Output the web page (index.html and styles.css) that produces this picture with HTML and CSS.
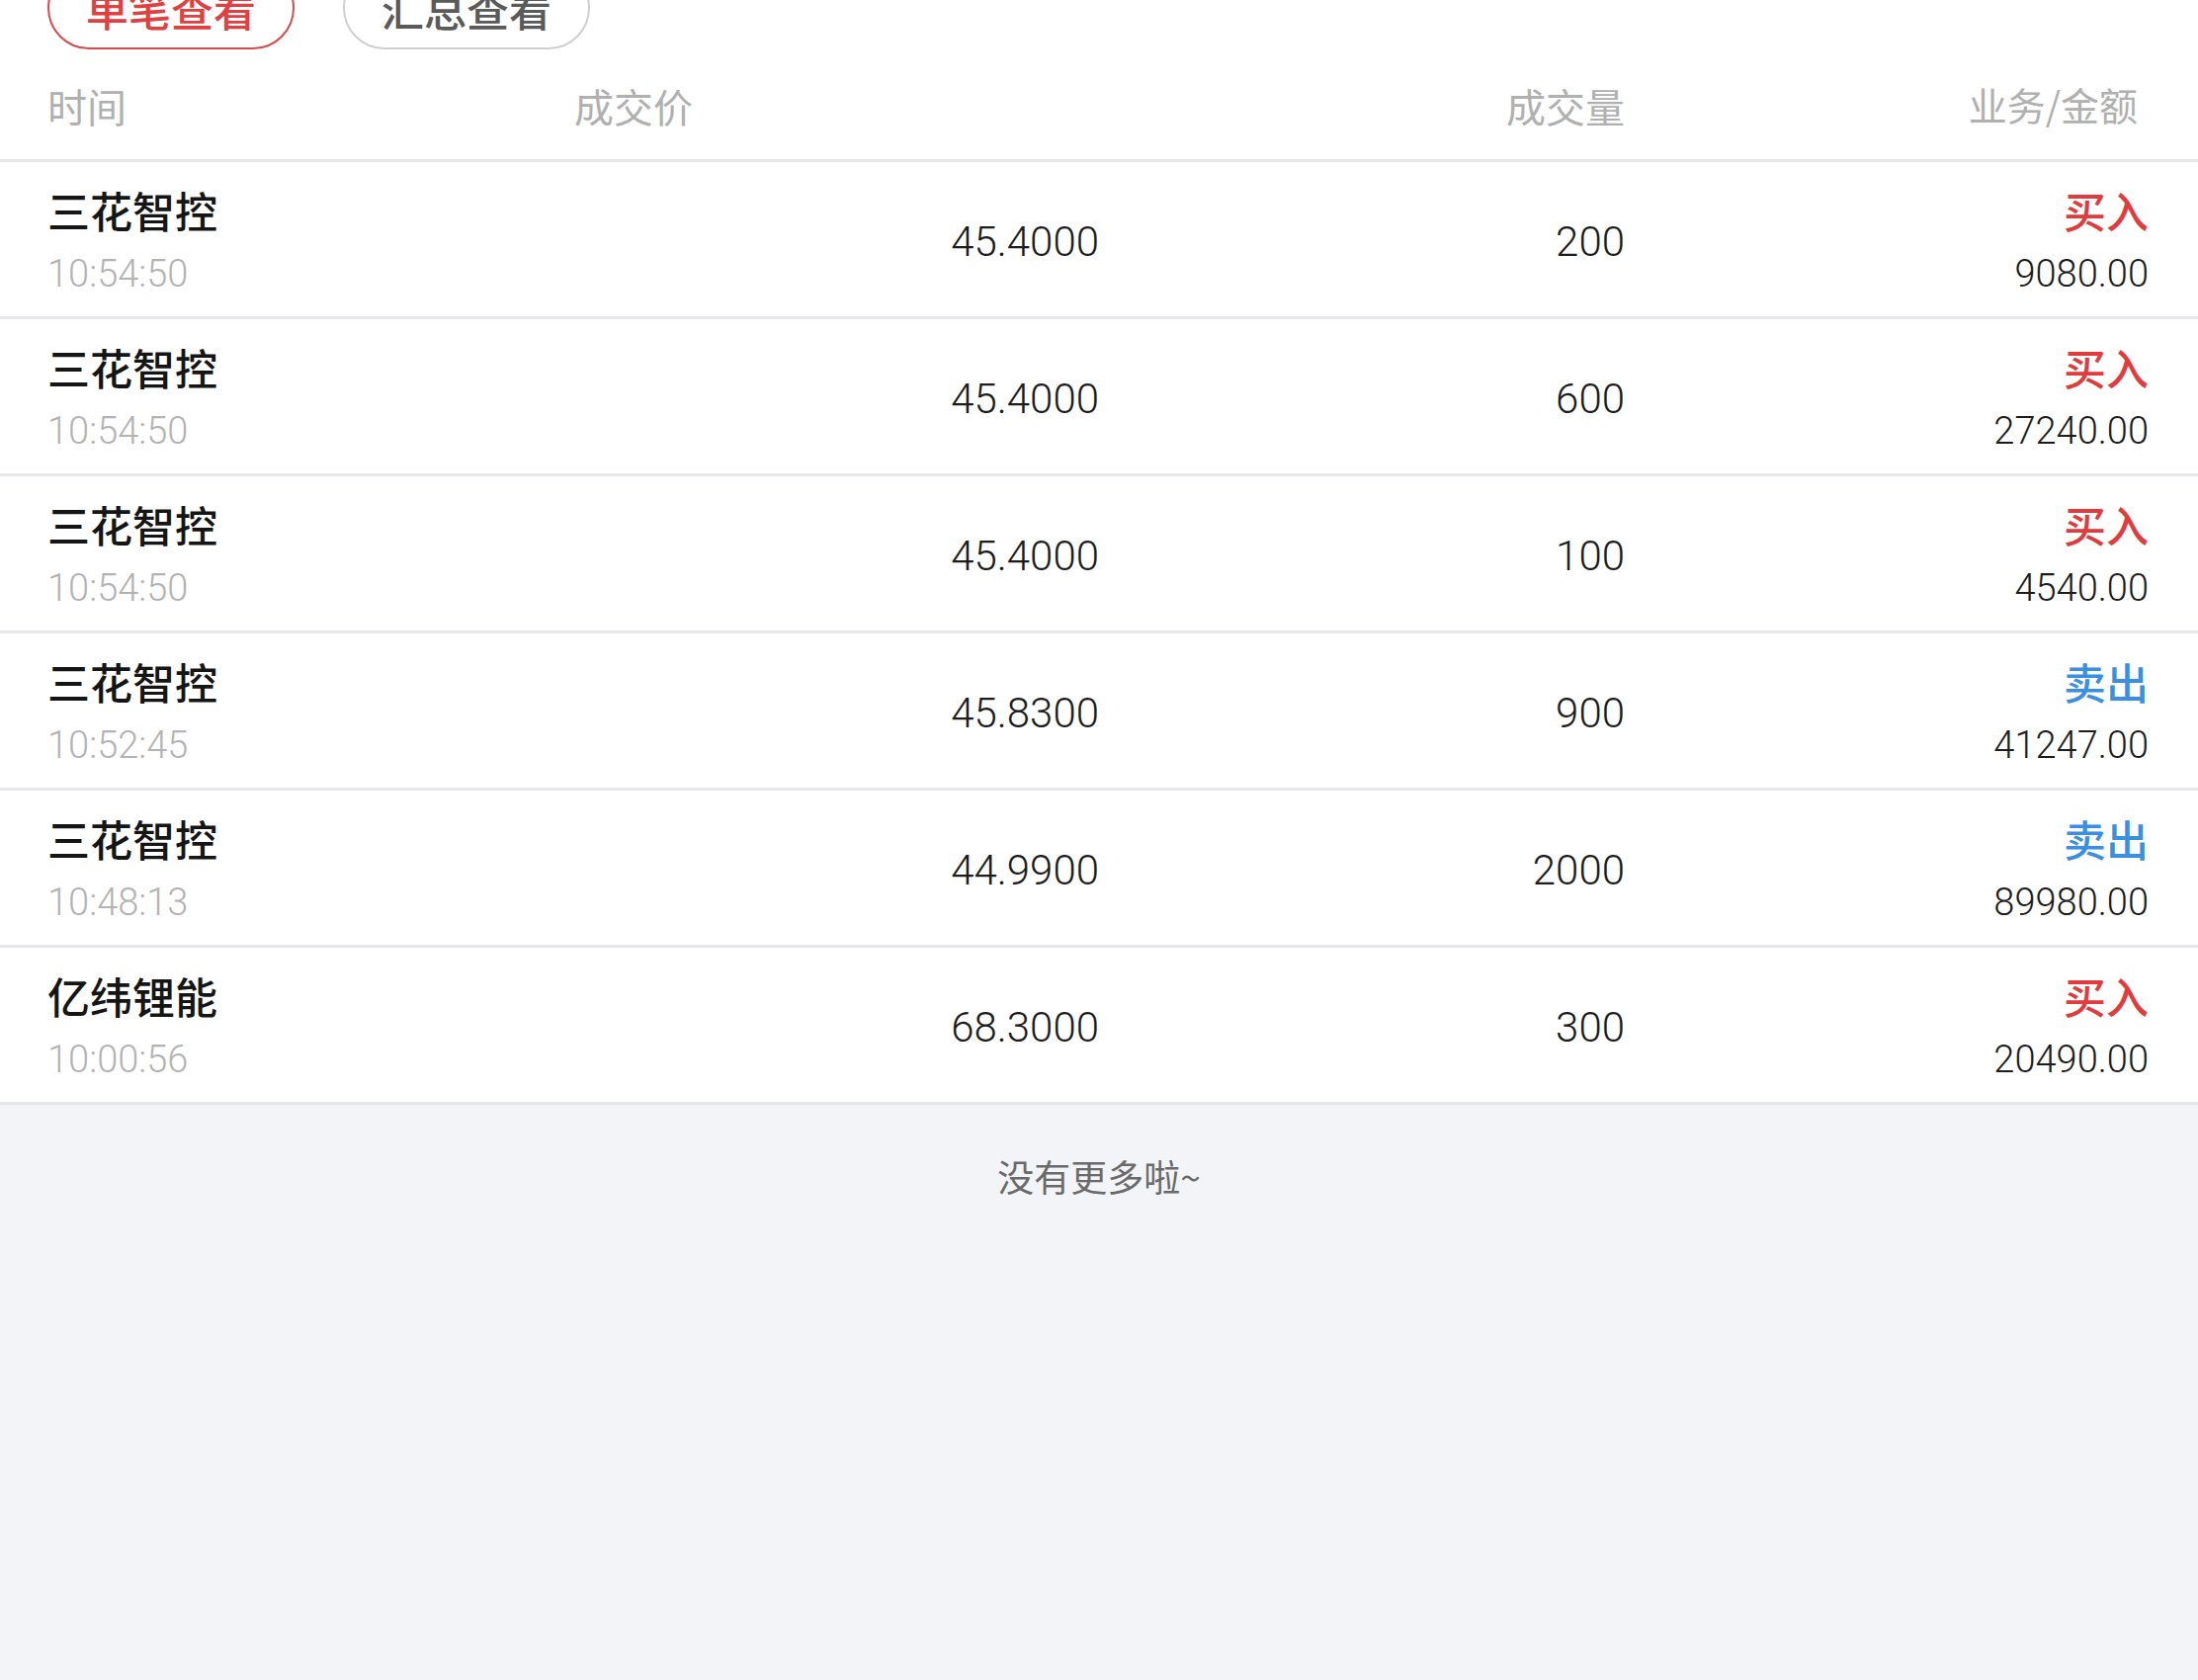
FILE: index.html
```html
<!DOCTYPE html>
<html lang="zh-CN">
<head>
    <meta charset="UTF-8" />
    <meta name="viewport" content="width=device-width, initial-scale=1.0" />
    <title>成交明细</title>
    <link rel="stylesheet" href="styles.css">
</head>
<body>
    <div class="page">
        <div class="tabs">
            <span class="tab tab-active">单笔查看</span>
            <span class="tab">汇总查看</span>
        </div>

        <div class="deal-list">
            <div class="list-head">
                <span>时间</span>
                <span>成交价</span>
                <span class="right">成交量</span>
                <span class="right">业务/金额</span>
            </div>

            <div class="deal">
                <div class="stack">
                    <div class="name">三花智控</div>
                    <div class="sub time">10:54:50</div>
                </div>
                <div class="num">45.4000</div>
                <div class="num">200</div>
                <div class="stack right">
                    <div class="side buy">买入</div>
                    <div class="sub amount">9080.00</div>
                </div>
            </div>

            <div class="deal">
                <div class="stack">
                    <div class="name">三花智控</div>
                    <div class="sub time">10:54:50</div>
                </div>
                <div class="num">45.4000</div>
                <div class="num">600</div>
                <div class="stack right">
                    <div class="side buy">买入</div>
                    <div class="sub amount">27240.00</div>
                </div>
            </div>

            <div class="deal">
                <div class="stack">
                    <div class="name">三花智控</div>
                    <div class="sub time">10:54:50</div>
                </div>
                <div class="num">45.4000</div>
                <div class="num">100</div>
                <div class="stack right">
                    <div class="side buy">买入</div>
                    <div class="sub amount">4540.00</div>
                </div>
            </div>

            <div class="deal">
                <div class="stack">
                    <div class="name">三花智控</div>
                    <div class="sub time">10:52:45</div>
                </div>
                <div class="num">45.8300</div>
                <div class="num">900</div>
                <div class="stack right">
                    <div class="side sell">卖出</div>
                    <div class="sub amount">41247.00</div>
                </div>
            </div>

            <div class="deal">
                <div class="stack">
                    <div class="name">三花智控</div>
                    <div class="sub time">10:48:13</div>
                </div>
                <div class="num">44.9900</div>
                <div class="num">2000</div>
                <div class="stack right">
                    <div class="side sell">卖出</div>
                    <div class="sub amount">89980.00</div>
                </div>
            </div>

            <div class="deal">
                <div class="stack">
                    <div class="name">亿纬锂能</div>
                    <div class="sub time">10:00:56</div>
                </div>
                <div class="num">68.3000</div>
                <div class="num">300</div>
                <div class="stack right">
                    <div class="side buy">买入</div>
                    <div class="sub amount">20490.00</div>
                </div>
            </div>
        </div>

        <div class="no-more">没有更多啦~</div>
    </div>
</body>
</html>
```

FILE: styles.css
```css
html, body {
    margin: 0;
    height: 100%;
}
body {
    background-color: #f3f4f8;
    font-family: "Noto Sans CJK SC", "Noto Sans", sans-serif;
    overflow: hidden;
}
.page {
    min-height: 100%;
}
.tabs {
    display: flex;
    gap: 49px;
    margin-top: -34px;
    padding: 0 48px;
    background-color: #fff;
}
.tab {
    display: flex;
    align-items: center;
    justify-content: center;
    box-sizing: border-box;
    width: 250px;
    height: 84px;
    border: 2px solid #cfcfcf;
    border-radius: 42px;
    font-size: 43px;
    font-weight: 500;
    color: #5a5a5a;
}
.tab-active {
    border-color: #d9494b;
    color: #e0403f;
}
.deal-list {
    background-color: #fff;
}
.list-head {
    display: grid;
    grid-template-columns: 533px 531px 532px 1fr;
    align-items: center;
    height: 114px;
    padding: 2px 61px 0 48px;
    box-sizing: border-box;
    border-bottom: 3px solid #e6e7eb;
    font-size: 40px;
    color: #b0b0b0;
}
.list-head span:last-child {
    font-size: 39px;
    margin-top: -4px;
}
.right {
    text-align: right;
}
.deal {
    display: grid;
    grid-template-columns: 552px 512px 532px 1fr;
    align-items: center;
    height: 159px;
    box-sizing: border-box;
    padding: 0 50px 0 48px;
    border-bottom: 3px solid #e6e7eb;
}
.name,
.side {
    font-size: 43px;
    line-height: 52px;
    font-weight: 500;
    color: #151515;
}
.side.buy {
    color: #e23b3d;
}
.side.sell {
    color: #3b8fe3;
}
.sub,
.num {
    font-family: Roboto, "Liberation Sans", sans-serif;
    font-weight: 300;
}
.sub {
    margin-top: 17px;
    font-size: 38px;
    line-height: 44px;
    letter-spacing: 0;
}
.time {
    color: #b3b3b3;
}
.amount {
    color: #1c1c1c;
}
.num {
    padding-top: 4px;
    text-align: right;
    font-size: 42px;
    letter-spacing: 0;
    color: #1c1c1c;
}
.no-more {
    padding-top: 47px;
    text-align: center;
    font-size: 37px;
    line-height: 50px;
    color: #6a6a6a;
}
```
